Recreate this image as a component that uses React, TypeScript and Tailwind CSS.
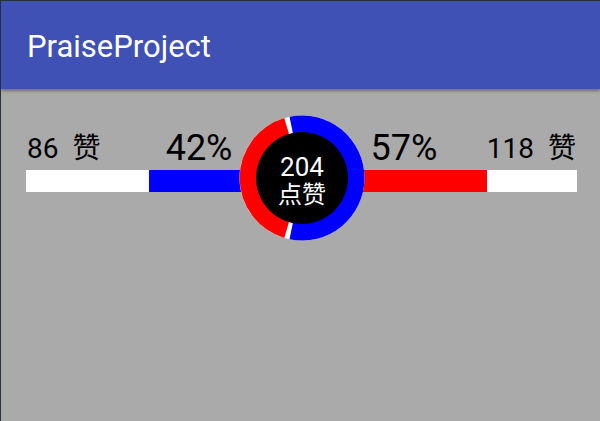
import React from "react";

const font = { fontFamily: "Roboto, 'Noto Sans CJK SC', sans-serif" };

function Ring() {
  return (
    <svg width="126" height="126" viewBox="0 0 126 126" className="absolute inset-0">
      <circle cx="63" cy="63" r="62.5" fill="#ffffff" />
      <path d="M63 63 L50.54 1.76 A62.5 62.5 0 1 1 50.54 124.24 Z" fill="#0000ff" />
      <path d="M63 63 L45.25 122.9 A62.5 62.5 0 0 1 45.25 3.1 Z" fill="#ff0000" />
      <circle cx="63" cy="63" r="46" fill="#000000" />
    </svg>
  );
}

export default function App() {
  return (
    <div
      className="w-[600px] h-[421px] bg-[#aaaaaa] border-l border-t border-[#283040] flex flex-col overflow-hidden"
      style={font}
    >
      <div className="h-[88px] bg-[#3f51b5] flex items-center pl-[26px] pt-[3px] shadow-[0_2px_3px_rgba(0,0,0,0.35)] relative z-10">
        <span className="text-white text-[31px] leading-none">PraiseProject</span>
      </div>
      <div className="relative ml-[25px] w-[551px] mt-[41px]">
        <div className="grid grid-cols-2">
          <div className="flex items-end justify-between pr-[69px] pl-[1px]">
            <span className="flex gap-[14px] text-[28px] leading-none text-black mb-[3px]">
              <span>86</span>
              <span>赞</span>
            </span>
            <span className="text-[36px] leading-none text-black">42%</span>
          </div>
          <div className="flex items-end justify-between pl-[69px] pr-[1px]">
            <span className="text-[36px] leading-none text-black">57%</span>
            <span className="flex gap-[14px] text-[28px] leading-none text-black mb-[3px]">
              <span>118</span>
              <span>赞</span>
            </span>
          </div>
        </div>
        <div className="flex h-[22px] mt-[4px]">
          <div className="w-[123px] bg-white" />
          <div className="w-[152.5px] bg-[#0000ff]" />
          <div className="w-[185.5px] bg-[#ff0000]" />
          <div className="w-[90px] bg-white" />
        </div>
        <div className="absolute left-[213px] top-[-15px] w-[126px] h-[126px]">
          <Ring />
          <div className="absolute inset-0 flex flex-col items-center justify-center text-white pt-[5px]">
            <span className="text-[26px] leading-none">204</span>
            <span className="text-[24px] leading-none mt-[3px]">点赞</span>
          </div>
        </div>
      </div>
    </div>
  );
}
